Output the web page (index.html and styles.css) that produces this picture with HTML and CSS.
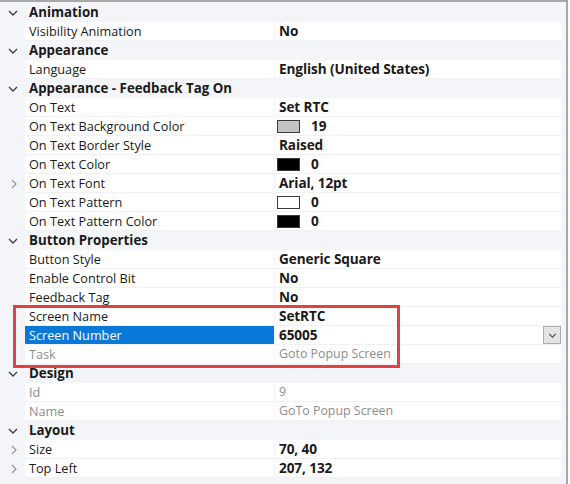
FILE: index.html
```html
<!doctype html>
<html>
  <head>
    <meta charset="utf-8">
    <title>Properties</title>
    <link rel="stylesheet" href="styles.css">
  </head>
  <body>
    <div class="grid">
      <div class="row cat"><span class="gut"><svg class="down" viewBox="0 0 10 6"><polyline points="1,1 5,5 9,1"/></svg></span><span class="name">Animation</span><span class="val"></span></div>
      <div class="row"><span class="gut"></span><span class="name">Visibility Animation</span><span class="val b">No</span></div>

      <div class="row cat"><span class="gut"><svg class="down" viewBox="0 0 10 6"><polyline points="1,1 5,5 9,1"/></svg></span><span class="name">Appearance</span><span class="val"></span></div>
      <div class="row"><span class="gut"></span><span class="name">Language</span><span class="val b">English (United States)</span></div>

      <div class="row cat"><span class="gut"><svg class="down" viewBox="0 0 10 6"><polyline points="1,1 5,5 9,1"/></svg></span><span class="name">Appearance - Feedback Tag On</span><span class="val"></span></div>
      <div class="row"><span class="gut"></span><span class="name">On Text</span><span class="val b">Set RTC</span></div>
      <div class="row"><span class="gut"></span><span class="name">On Text Background Color</span><span class="val b"><i class="sw gray"></i>19</span></div>
      <div class="row"><span class="gut"></span><span class="name">On Text Border Style</span><span class="val b">Raised</span></div>
      <div class="row"><span class="gut"></span><span class="name">On Text Color</span><span class="val b"><i class="sw black"></i>0</span></div>
      <div class="row"><span class="gut"><svg class="right" viewBox="0 0 6 10"><polyline points="1,1 5,5 1,9"/></svg></span><span class="name">On Text Font</span><span class="val b">Arial, 12pt</span></div>
      <div class="row"><span class="gut"></span><span class="name">On Text Pattern</span><span class="val b"><i class="sw white"></i>0</span></div>
      <div class="row"><span class="gut"></span><span class="name">On Text Pattern Color</span><span class="val b"><i class="sw black"></i>0</span></div>

      <div class="row cat"><span class="gut"><svg class="down" viewBox="0 0 10 6"><polyline points="1,1 5,5 9,1"/></svg></span><span class="name">Button Properties</span><span class="val"></span></div>
      <div class="row"><span class="gut"></span><span class="name">Button Style</span><span class="val b">Generic Square</span></div>
      <div class="row"><span class="gut"></span><span class="name">Enable Control Bit</span><span class="val b">No</span></div>
      <div class="row"><span class="gut"></span><span class="name">Feedback Tag</span><span class="val b">No</span></div>
      <div class="row"><span class="gut"></span><span class="name">Screen Name</span><span class="val b">SetRTC</span></div>
      <div class="row sel"><span class="gut"></span><span class="name">Screen Number</span><span class="val b">65005<span class="drop"><svg viewBox="0 0 10 6"><polyline points="1,1 5,5 9,1"/></svg></span></span></div>
      <div class="row dis"><span class="gut"></span><span class="name">Task</span><span class="val">Goto Popup Screen</span></div>

      <div class="row cat"><span class="gut"><svg class="down" viewBox="0 0 10 6"><polyline points="1,1 5,5 9,1"/></svg></span><span class="name">Design</span><span class="val"></span></div>
      <div class="row dis"><span class="gut"></span><span class="name">Id</span><span class="val">9</span></div>
      <div class="row dis"><span class="gut"></span><span class="name">Name</span><span class="val">GoTo Popup Screen</span></div>

      <div class="row cat"><span class="gut"><svg class="down" viewBox="0 0 10 6"><polyline points="1,1 5,5 9,1"/></svg></span><span class="name">Layout</span><span class="val"></span></div>
      <div class="row"><span class="gut"><svg class="right" viewBox="0 0 6 10"><polyline points="1,1 5,5 1,9"/></svg></span><span class="name">Size</span><span class="val b">70, 40</span></div>
      <div class="row"><span class="gut"><svg class="right" viewBox="0 0 6 10"><polyline points="1,1 5,5 1,9"/></svg></span><span class="name">Top Left</span><span class="val b">207, 132</span></div>

      <div class="mark"></div>
    </div>
  </body>
</html>
```

FILE: styles.css
```css
body {
  margin: 0;
  background: #ffffff;
  font-family: "Open Sans", "Noto Sans", sans-serif;
  font-size: 12.7px;
  color: #1a1a1a;
}

.grid {
  position: relative;
  width: 568px;
  height: 484px;
  border-top: 2px solid #a8a8a8;
  border-right: 2px solid #a8a8a8;
  padding-top: 1px;
  background: #f3f5f9;
  box-sizing: border-box;
}

.row {
  display: grid;
  grid-template-columns: 25px 249px 287px;
  height: 19px;
  align-items: stretch;
  line-height: 18px;
}

.row .gut {
  background: #f3f5f9;
  display: flex;
  align-items: center;
  justify-content: center;
}

.row .name {
  background: #ffffff;
  border-bottom: 1px solid #f0f1f4;
  padding-left: 4px;
  white-space: nowrap;
}

.row .val {
  background: #ffffff;
  border-bottom: 1px solid #f0f1f4;
  padding-left: 4px;
  margin-left: 1px;
  display: flex;
  align-items: center;
  white-space: nowrap;
  position: relative;
}

.row .val.b {
  font-weight: bold;
  font-size: 13.6px;
  letter-spacing: -0.1px;
}

.cat .name,
.cat .val {
  background: #f3f5f9;
  border-bottom-color: #f3f5f9;
  font-weight: bold;
  font-size: 13.3px;
}

.down {
  width: 10px;
  height: 6px;
  fill: none;
  stroke: #404040;
  stroke-width: 1.4;
  margin-left: 1px;
}

.right {
  width: 6px;
  height: 10px;
  fill: none;
  stroke: #9a9a9a;
  stroke-width: 1.3;
  margin-left: 3px;
}

.sw {
  display: inline-block;
  width: 21px;
  height: 11px;
  border: 1px solid #3a3a3a;
  margin-left: -2px;
  margin-right: 11px;
}

.sw.gray { background: #c4c4c4; }
.sw.black { background: #000000; }
.sw.white { background: #ffffff; }

.sel .name {
  background: #0a78d7;
  color: #ffffff;
}

.dis .name,
.dis .val {
  color: #8d8d8d;
}

.dis .val {
  font-size: 12.4px;
}

.drop {
  position: absolute;
  right: 0;
  top: 0;
  width: 16px;
  height: 16px;
  background: #e4e4e4;
  border: 1px solid #adadad;
  display: flex;
  align-items: center;
  justify-content: center;
}

.drop svg {
  width: 9px;
  height: 5px;
  fill: none;
  stroke: #505050;
  stroke-width: 1.3;
}

.mark {
  position: absolute;
  left: 13px;
  top: 303px;
  width: 387px;
  height: 63px;
  border: 3px solid #e2423e;
  box-sizing: border-box;
}
```
